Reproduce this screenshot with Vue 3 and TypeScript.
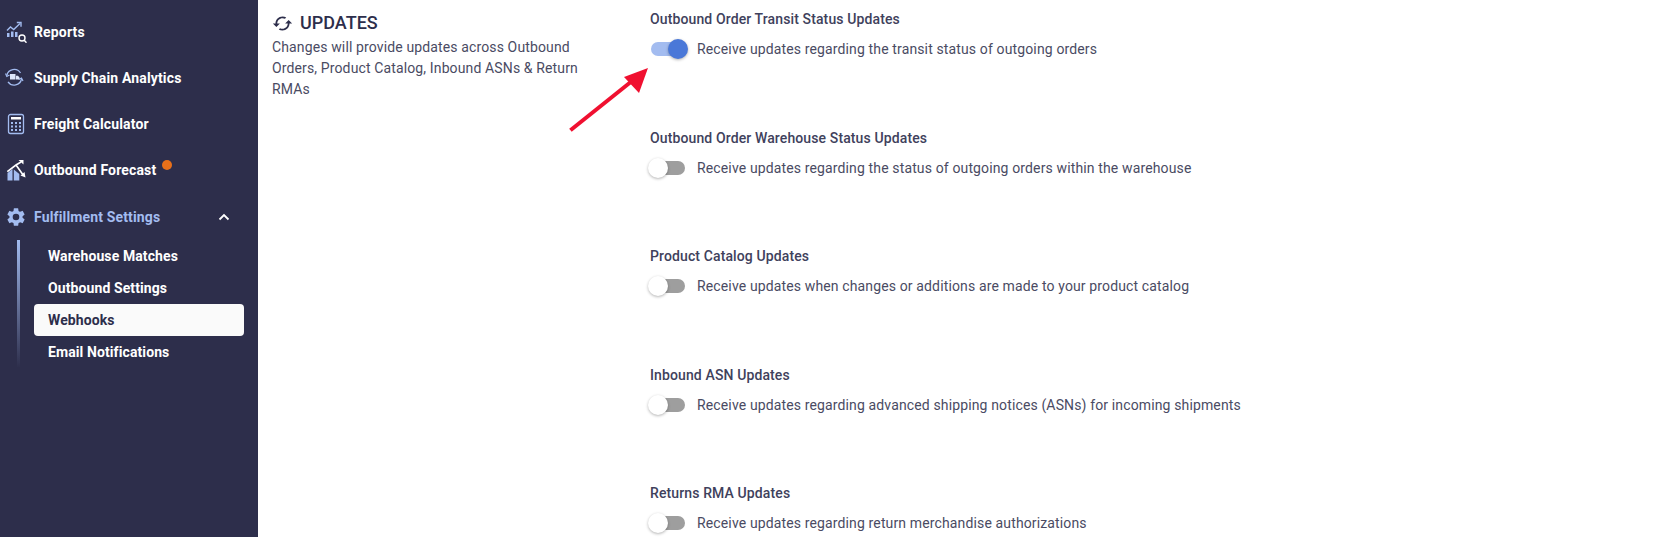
<script setup lang="ts">
interface NavItem {
  label: string
  icon: string
  dot?: boolean
}

interface UpdateRow {
  title: string
  text: string
  on?: boolean
}

const navItems: NavItem[] = [
  { label: 'Reports', icon: 'reports' },
  { label: 'Supply Chain Analytics', icon: 'supply' },
  { label: 'Freight Calculator', icon: 'calc' },
  { label: 'Outbound Forecast', icon: 'forecast', dot: true },
]

const subItems = ['Warehouse Matches', 'Outbound Settings', 'Webhooks', 'Email Notifications']

const rows: UpdateRow[] = [
  { title: 'Outbound Order Transit Status Updates', text: 'Receive updates regarding the transit status of outgoing orders', on: true },
  { title: 'Outbound Order Warehouse Status Updates', text: 'Receive updates regarding the status of outgoing orders within the warehouse' },
  { title: 'Product Catalog Updates', text: 'Receive updates when changes or additions are made to your product catalog' },
  { title: 'Inbound ASN Updates', text: 'Receive updates regarding advanced shipping notices (ASNs) for incoming shipments' },
  { title: 'Returns RMA Updates', text: 'Receive updates regarding return merchandise authorizations' },
]
</script>

<template>
  <div class="page">
    <aside class="sidebar">
      <a v-for="item in navItems" :key="item.label" class="nav-item">
        <svg class="nav-icon" viewBox="0 0 22 22" fill="none">
          <template v-if="item.icon === 'reports'">
            <path d="M2 9.500 5.500 6l3.200 2.500L15 2.500" stroke="#a3bcf0" stroke-width="1.400" />
            <path d="M11.800 1.500h4.200v4.200" stroke="#a3bcf0" stroke-width="1.400" />
            <path d="M2 12h2.500v4H2zM6 10.500h2.500V16H6zM10 11h2.500v5H10z" fill="#a3bcf0" />
            <circle cx="17" cy="17" r="3" fill="#2d2e4b" stroke="#fff" stroke-width="1.400" />
            <path d="m19.200 19.200 2.300 2.500" stroke="#fff" stroke-width="1.500" />
          </template>
          <template v-else-if="item.icon === 'supply'">
            <path d="M1.800 8.500A7.500 7.500 0 0 1 15.500 6M16.500 12a7.500 7.500 0 0 1-13.500 2.800" stroke="#a3bcf0" stroke-width="1.300" />
            <path d="M0.500 6.500 1.800 9.500 4.500 8M18 14l-1.500-3-2.800 1.500" stroke="#a3bcf0" stroke-width="1.200" />
            <path d="M5 7h5.500v5.500H5zM11 8.800h2l1.500 1.700v2H11z" fill="#dfe7fa" />
          </template>
          <template v-else-if="item.icon === 'calc'">
            <rect x="3.500" y="1.500" width="15" height="19" rx="2" stroke="#a3bcf0" stroke-width="1.300" />
            <path d="M6 4h10v2.500H6z" fill="#fff" />
            <path d="M6 9h2v2H6zM10 9h2v2h-2zM14 9h2v2h-2zM6 12.500h2v2H6zM10 12.500h2v2h-2zM14 12.500h2v2h-2zM6 16h2v2H6zM10 16h2v2h-2zM14 16h2v2h-2z" fill="#a3bcf0" />
          </template>
          <template v-else-if="item.icon === 'forecast'">
            <path d="M2.500 21.500v-7.500l5-4v11.500zM8.800 21.500V10.500l5.500 4.500v6.500z" fill="#a3bcf0" />
            <path d="M2.300 12.700 11 6l7.500 10.500M11 6l5-3" stroke="#fff" stroke-width="1.600" />
            <path d="M13.500 1H18.500v4.500zM20.500 18.500l-1-5.500-4 3.500z" fill="#fff" />
          </template>
        </svg>
        <span class="nav-label">{{ item.label }}</span>
        <span v-if="item.dot" class="nav-dot"></span>
      </a>

      <div class="nav-item group">
        <svg class="nav-icon" viewBox="0 0 24 24" fill="#a3bcf0">
          <path d="M19.140 12.940a7.500 7.500 0 0 0 0-1.880l2.030-1.580a.48.48 0 0 0 .12-.61l-1.920-3.320a.49.49 0 0 0-.59-.22l-2.390.96a7 7 0 0 0-1.620-.94l-.36-2.540a.48.48 0 0 0-.48-.41h-3.840a.47.470 0 0 0-.47.410l-.36 2.540a7.300 7.300 0 0 0-1.630.94l-2.390-.96a.48.48 0 0 0-.59.22L2.740 8.870a.47.470 0 0 0 .12.610l2.030 1.580a7.600 7.600 0 0 0 0 1.880l-2.030 1.580a.48.48 0 0 0-.12.610l1.920 3.320c.12.220.37.290.59.220l2.390-.96c.5.380 1.030.7 1.620.94l.36 2.540c.05.240.24.410.48.410h3.840c.24 0 .44-.17.47-.41l.36-2.540a7 7 0 0 0 1.620-.94l2.390.96c.22.080.47 0 .59-.22l1.920-3.320a.47.470 0 0 0-.12-.61zM12 15.600a3.600 3.600 0 1 1 0-7.200 3.600 3.600 0 0 1 0 7.200z" />
        </svg>
        <span class="nav-label group-label">Fulfillment Settings</span>
        <svg class="chevron" viewBox="0 0 12 8" fill="none">
          <path d="M1.500 6.500 6 2l4.500 4.500" stroke="#fff" stroke-width="1.800" />
        </svg>
      </div>

      <div class="sub-list">
        <a v-for="sub in subItems" :key="sub" class="sub-item" :class="{ active: sub === 'Webhooks' }">{{ sub }}</a>
      </div>
    </aside>

    <main class="content">
      <section class="intro">
        <h2 class="intro-title">
          <svg class="intro-icon" viewBox="0 0 24 24" fill="#2d2e4b">
            <path d="M19 8l-4 4h3c0 3.310-2.690 6-6 6-1.010 0-1.970-.25-2.800-.7l-1.460 1.460C8.970 19.540 10.430 20 12 20c4.420 0 8-3.580 8-8h3l-4-4zM6 12c0-3.310 2.690-6 6-6 1.010 0 1.970.25 2.800.7l1.460-1.460C15.030 4.460 13.570 4 12 4c-4.420 0-8 3.580-8 8H1l4 4 4-4H6z" />
          </svg>
          UPDATES
        </h2>
        <p class="intro-text">Changes will provide updates across Outbound Orders, Product Catalog, Inbound ASNs &amp; Return RMAs</p>
      </section>

      <section class="rows">
        <div v-for="row in rows" :key="row.title" class="row">
          <div class="row-title">{{ row.title }}</div>
          <div class="row-body">
            <span class="toggle" :class="{ on: row.on }"><span class="knob"></span></span>
            <span class="row-text">{{ row.text }}</span>
          </div>
        </div>
      </section>

      <!-- annotation drawn on top of the screenshot -->
      <svg class="arrow" viewBox="0 0 90 70" fill="none">
        <path d="M6 64 66 16" stroke="#f01030" stroke-width="4" stroke-linecap="square" />
        <path d="M82 3 58 12 73 28z" fill="#f01030" />
      </svg>
    </main>
  </div>
</template>

<style scoped>
.page {
  display: flex;
  height: 537px;
  overflow: hidden;
  font-family: Roboto, "Liberation Sans", sans-serif;
}

.sidebar {
  width: 258px;
  flex: none;
  background: #2d2e4b;
  padding-top: 9px;
  box-sizing: border-box;
}

.nav-item {
  display: flex;
  align-items: center;
  height: 46px;
  padding-left: 5px;
}

.nav-icon {
  width: 22px;
  height: 22px;
  flex: none;
}

.nav-label {
  margin-left: 7px;
  color: #fff;
  font-size: 14px;
  font-weight: 700;
  letter-spacing: 0.15px;
}

.nav-dot {
  width: 10px;
  height: 10px;
  margin: -10px 0 0 6px;
  border-radius: 50%;
  background: #e8701a;
}

.group {
  height: 47px;
}

.group-label {
  color: #a3bcf0;
}

.chevron {
  width: 12px;
  height: 8px;
  margin: 0 28px 0 auto;
}

.sub-list {
  display: flex;
  flex-direction: column;
  height: 127px;
  margin: 0 14px 0 17px;
  padding-left: 14px;
  border-left: 3px solid;
  border-image: linear-gradient(#a3bcf0, #2d2e4b) 1;
}

.sub-item {
  display: flex;
  align-items: center;
  flex: none;
  height: 32px;
  padding-left: 14px;
  color: #fff;
  font-size: 14px;
  font-weight: 700;
  letter-spacing: 0.1px;
}

.sub-item.active {
  background: #fafafa;
  color: #2d2e4b;
  border-radius: 4px;
}

.content {
  position: relative;
  flex: 1;
  display: flex;
  background: #fff;
  color: #2d2e4b;
}

.intro {
  width: 392px;
  flex: none;
  padding: 11px 0 0 14px;
  box-sizing: border-box;
}

.intro-title {
  display: flex;
  align-items: center;
  gap: 7px;
  margin: 0;
  font-size: 18px;
  font-weight: 500;
  line-height: 24px;
}

.intro-icon {
  width: 21px;
  height: 21px;
}

.intro-text {
  margin: 2px 0 0;
  width: 315px;
  font-size: 14px;
  line-height: 21px;
  color: #4a4b63;
  letter-spacing: 0.13px;
}

.rows {
  display: flex;
  flex-direction: column;
  padding-top: 9px;
}

.row {
  height: 118.500px;
  flex: none;
}

.row-title {
  font-size: 14px;
  font-weight: 500;
  line-height: 20px;
  letter-spacing: 0.12px;
  color: #40415c;
}

.row-body {
  display: flex;
  align-items: center;
  margin-top: 9px;
  height: 22px;
}

.toggle {
  position: relative;
  width: 34px;
  height: 14px;
  margin-left: 1px;
  border-radius: 7px;
  background: #9e9e9e;
  flex: none;
}

.toggle.on {
  background: #a3bcf0;
}

.knob {
  position: absolute;
  top: -3px;
  left: -3px;
  width: 20px;
  height: 20px;
  border-radius: 50%;
  background: #fff;
  box-shadow: 0 1px 3px rgba(0, 0, 0, 0.3);
}

.toggle.on .knob {
  left: 17px;
  background: #4a78d8;
}

.row-text {
  margin-left: 12px;
  font-size: 14px;
  letter-spacing: 0.135px;
  color: #4a4b63;
}

.arrow {
  position: absolute;
  left: 308px;
  top: 65px;
  width: 90px;
  height: 70px;
}
</style>

<style>
body {
  margin: 0;
  background: #fff;
}
</style>
